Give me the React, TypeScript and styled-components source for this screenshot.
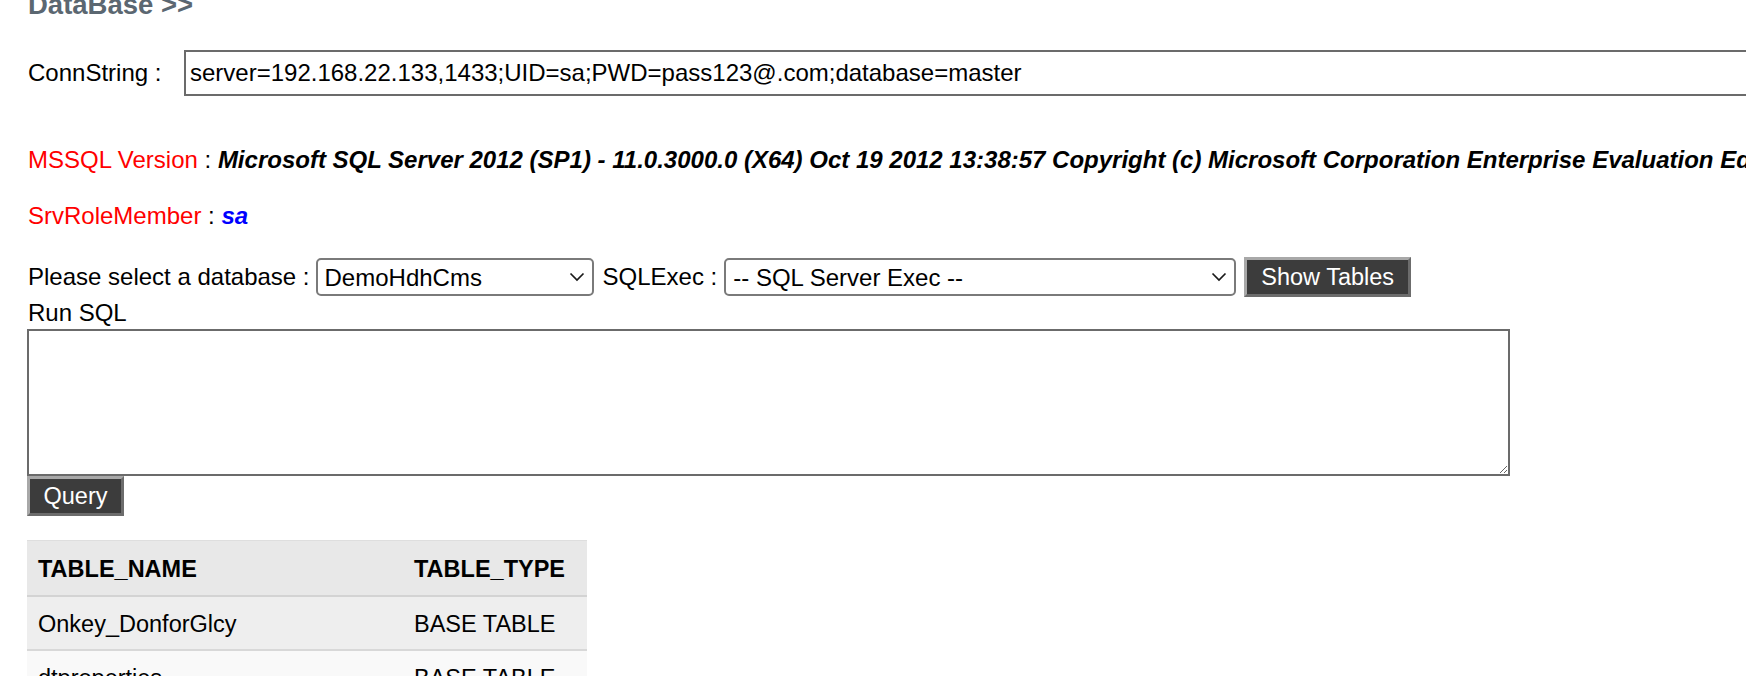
import React from "react";
import styled, { createGlobalStyle } from "styled-components";

const Global = createGlobalStyle`
  html, body {
    margin: 0;
    padding: 0;
    background: #ffffff;
    overflow: hidden;
  }
  body {
    font-family: "Liberation Sans", Arial, Helvetica, sans-serif;
    font-size: 24px;
    color: #000;
  }
`;

const Page = styled.div`
  width: 1746px;
  height: 676px;
  overflow: hidden;
  padding-left: 27px;
  box-sizing: border-box;
`;

const Heading = styled.h2`
  margin: -9px 0 0 1px;
  height: 24px;
  font-size: 27.5px;
  line-height: 27px;
  font-weight: bold;
  color: #5b6771;
  white-space: nowrap;
`;

const ConnRow = styled.div`
  display: flex;
  align-items: center;
  margin-top: 35px;
  height: 46px;
  white-space: nowrap;
`;

const ConnLabel = styled.span`
  width: 156px;
  padding-left: 1px;
  flex: none;
`;

const TextInput = styled.input`
  flex: none;
  width: 1640px;
  height: 46px;
  box-sizing: border-box;
  border: 2px solid #6b6b6b;
  padding: 0 4px;
  font-family: inherit;
  font-size: 24px;
  color: #000;
  outline: none;
`;

const InfoLine = styled.div<{ $gap: number }>`
  margin-top: ${(p) => p.$gap}px;
  line-height: 30px;
  height: 30px;
  white-space: nowrap;
  padding-left: 1px;
`;

const RedLabel = styled.span`
  color: #ff0000;
`;

const Value = styled.b<{ $blue?: boolean }>`
  font-style: italic;
  font-weight: bold;
  color: ${(p) => (p.$blue ? "#0000ff" : "#000")};
`;

const SelectRow = styled.div`
  display: flex;
  align-items: center;
  height: 40px;
  margin-top: 26px;
  white-space: nowrap;
`;

const InlineLabel = styled.span<{ $ml?: number }>`
  line-height: 30px;
  margin-left: ${(p) => p.$ml ?? 0}px;
  padding-left: 1px;
`;

const SelectWrap = styled.div<{ $w: number; $ml: number }>`
  position: relative;
  width: ${(p) => p.$w}px;
  margin-left: ${(p) => p.$ml}px;
  height: 38px;
  flex: none;
`;

const Select = styled.select`
  appearance: none;
  -webkit-appearance: none;
  width: 100%;
  height: 38px;
  box-sizing: border-box;
  border: 2px solid #7a7a7a;
  border-radius: 5px;
  background: #fff;
  padding: 0 30px 0 7px;
  font-family: inherit;
  font-size: 24px;
  color: #000;
  outline: none;
`;

const Chevron = styled.svg`
  position: absolute;
  right: 9px;
  top: 14px;
  width: 16px;
  height: 10px;
  pointer-events: none;
`;

const DarkButton = styled.button<{ $ml?: number }>`
  flex: none;
  height: 40px;
  margin-left: ${(p) => p.$ml ?? 0}px;
  padding: 0 14px;
  background: #3c3c3c;
  color: #ffffff;
  border-style: solid;
  border-width: 3px;
  border-color: #a8a8a8 #6c6c6c #6c6c6c #a8a8a8;
  font-family: inherit;
  font-size: 23.5px;
  line-height: 30px;
  cursor: pointer;
  outline: none;
`;

const RunLabel = styled.div`
  margin-top: 1px;
  line-height: 30px;
  height: 30px;
  padding-left: 1px;
`;

const SqlArea = styled.textarea`
  display: block;
  margin-top: 1px;
  width: 1483px;
  height: 147px;
  box-sizing: border-box;
  border: 2px solid #6b6b6b;
  font-family: inherit;
  font-size: 24px;
  outline: none;
`;

const QueryBtn = styled(DarkButton)`
  display: block;
  width: 97px;
  padding: 0;
`;

const Table = styled.table`
  margin-top: 24px;
  border-collapse: collapse;
  width: 560px;
  table-layout: fixed;
`;

const HeadCell = styled.th<{ $w: number }>`
  width: ${(p) => p.$w}px;
  height: 55px;
  text-align: left;
  padding: 4px 0 0 11px;
  background: #e8e8e8;
  border-top: 1px solid #dedede;
  border-bottom: 2px solid #d3d3d3;
  font-weight: bold;
  font-size: 23.5px;
  box-sizing: border-box;
`;

const Row = styled.tr<{ $alt: boolean }>`
  background: ${(p) => (p.$alt ? "#f9f9f9" : "#eeeeee")};
`;

const Cell = styled.td`
  height: 54px;
  box-sizing: border-box;
  padding: 4px 0 0 11px;
  border-bottom: 2px solid #d8d8d8;
  font-size: 23.5px;
  white-space: nowrap;
`;

const ChevronIcon = () => (
  <Chevron viewBox="0 0 16 10">
    <path d="M1.5 1.5 L8 8 L14.5 1.5" fill="none" stroke="#1a1a1a" strokeWidth="1.7" />
  </Chevron>
);

const rows = [
  { name: "Onkey_DonforGlcy", type: "BASE TABLE" },
  { name: "dtproperties", type: "BASE TABLE" },
];

export default function App() {
  return (
    <Page>
      <Global />
      <Heading>DataBase &gt;&gt;</Heading>
      <ConnRow>
        <ConnLabel>ConnString :</ConnLabel>
        <TextInput
          defaultValue="server=192.168.22.133,1433;UID=sa;PWD=pass123@.com;database=master"
        />
      </ConnRow>
      <InfoLine $gap={49}>
        <RedLabel>MSSQL Version</RedLabel> :{" "}
        <Value>
          Microsoft SQL Server 2012 (SP1) - 11.0.3000.0 (X64) Oct 19 2012 13:38:57 Copyright (c)
          Microsoft Corporation Enterprise Evaluation Edition (64-bit) on Windows NT 6.1 &lt;X64&gt;
          (Build 7601: Service Pack 1)
        </Value>
      </InfoLine>
      <InfoLine $gap={26}>
        <RedLabel>SrvRoleMember</RedLabel> : <Value $blue>sa</Value>
      </InfoLine>
      <SelectRow>
        <InlineLabel>Please select a database :</InlineLabel>
        <SelectWrap $w={278} $ml={6}>
          <Select defaultValue="DemoHdhCms">
            <option>DemoHdhCms</option>
            <option>master</option>
          </Select>
          <ChevronIcon />
        </SelectWrap>
        <InlineLabel $ml={8}>SQLExec :</InlineLabel>
        <SelectWrap $w={512} $ml={7}>
          <Select defaultValue="-- SQL Server Exec --">
            <option>-- SQL Server Exec --</option>
          </Select>
          <ChevronIcon />
        </SelectWrap>
        <DarkButton $ml={8}>Show Tables</DarkButton>
      </SelectRow>
      <RunLabel>Run SQL</RunLabel>
      <SqlArea />
      <QueryBtn>Query</QueryBtn>
      <Table>
        <thead>
          <tr>
            <HeadCell $w={376}>TABLE_NAME</HeadCell>
            <HeadCell $w={184}>TABLE_TYPE</HeadCell>
          </tr>
        </thead>
        <tbody>
          {rows.map((r, i) => (
            <Row key={r.name} $alt={i % 2 === 1}>
              <Cell>{r.name}</Cell>
              <Cell>{r.type}</Cell>
            </Row>
          ))}
        </tbody>
      </Table>
    </Page>
  );
}
